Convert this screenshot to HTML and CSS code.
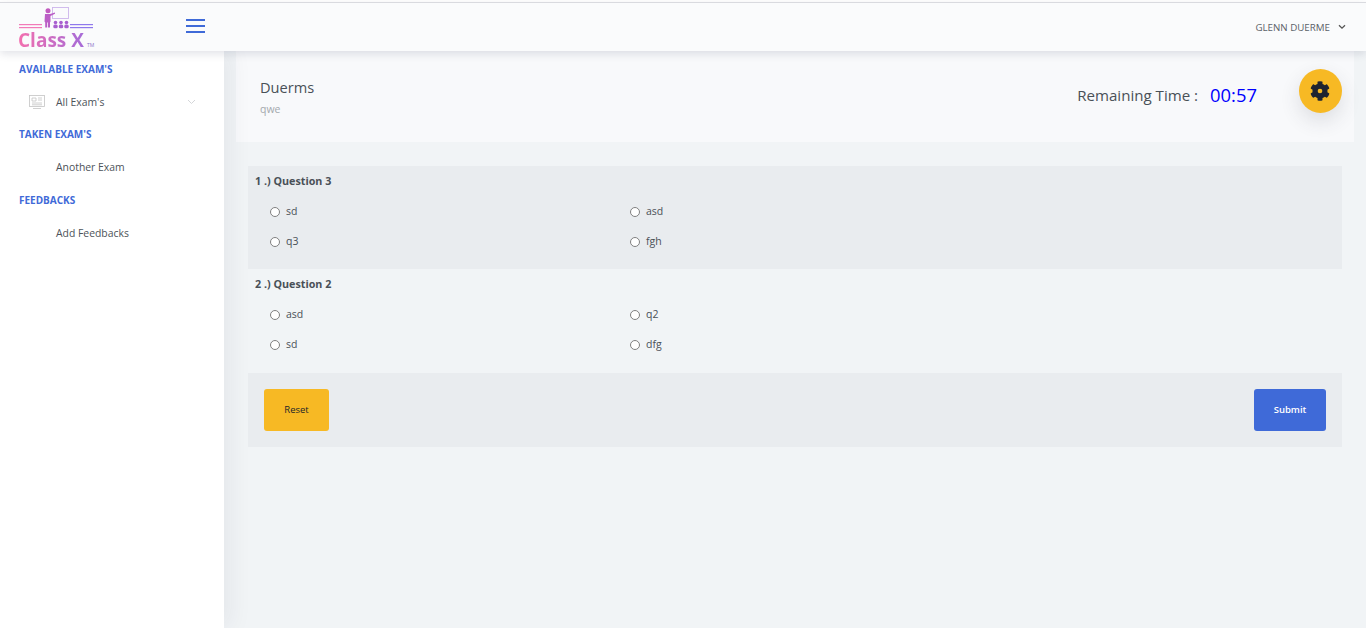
FILE: index.html
```html
<!DOCTYPE html>
<html lang="en">
<head>
<meta charset="utf-8">
<title>Class X</title>
<link rel="stylesheet" href="styles.css">
</head>
<body>
<div class="app">
  <header class="topbar">
    <div class="brand">
      <svg class="logo-art" width="76" height="25" viewBox="0 0 76 25">
        <rect x="1" y="17" width="23" height="1.200" fill="#f27ab8"/>
        <rect x="1" y="20" width="23" height="1.200" fill="#f27ab8"/>
        <rect x="52" y="17" width="23" height="1.200" fill="#8f78ec"/>
        <rect x="52" y="20" width="23" height="1.200" fill="#8f78ec"/>
        <rect x="34.500" y="0.500" width="16" height="11" fill="none" stroke="#cdb6ec" stroke-width="0.900"/>
        <circle cx="30" cy="3.800" r="2.500" fill="#c25cc0"/>
        <path d="M27 7h5l5-1.500v1.300l-4.500 2.200v5.500l-.5 1v5h-2v-5h-.8v5h-2v-5l-.7-1z" fill="#bb5fc6"/>
        <g fill="#a85fcf">
          <circle cx="37.500" cy="15.500" r="1.800"/><circle cx="43" cy="15.500" r="1.800"/><circle cx="48.500" cy="15.500" r="1.800"/>
          <rect x="35.300" y="17.500" width="4.400" height="3.800" rx="1.500"/><rect x="40.800" y="17.500" width="4.400" height="3.800" rx="1.500"/><rect x="46.300" y="17.500" width="4.400" height="3.800" rx="1.500"/>
        </g>
      </svg>
      <div class="logo-text"><span class="logo-name">Class X</span><span class="logo-tm">TM</span></div>
    </div>
    <button class="burger" aria-label="Menu"><span></span><span></span><span></span></button>
    <div class="user">
      <span>GLENN DUERME</span>
      <svg width="8" height="6" viewBox="0 0 8 6"><path d="M1 1.200l3 3 3-3" fill="none" stroke="#555" stroke-width="1.300"/></svg>
    </div>
  </header>
  <div class="body-row">
    <aside class="sidebar">
      <h3 class="nav-title">AVAILABLE EXAM'S</h3>
      <a class="nav-item">
        <svg class="nav-icon" width="16" height="16" viewBox="0 0 16 16" fill="none" stroke="#c4c4c4" stroke-width="0.800">
          <rect x="0.500" y="1.500" width="15" height="11"/>
          <path d="M3 4h4v3H3zM9 4h4M9 6h4M3 9h10M3 10.800h10M4 14.500h8"/>
        </svg>
        <span>All Exam's</span>
        <svg class="nav-caret" width="9" height="6" viewBox="0 0 9 6"><path d="M1 1l3.500 3.500L8 1" fill="none" stroke="#d4d6d9" stroke-width="1"/></svg>
      </a>
      <h3 class="nav-title">TAKEN EXAM'S</h3>
      <a class="nav-item"><span class="nav-spacer"></span><span>Another Exam</span></a>
      <h3 class="nav-title">FEEDBACKS</h3>
      <a class="nav-item"><span class="nav-spacer"></span><span>Add Feedbacks</span></a>
    </aside>
    <main class="main">
      <section class="title-card">
        <div class="title-text">
          <h1>Duerms</h1>
          <p>qwe</p>
        </div>
        <div class="timer">
          <span class="timer-label">Remaining Time :</span>
          <span class="timer-value">00:57</span>
        </div>
      </section>
      <form class="exam">
        <fieldset class="question shaded">
          <legend class="q-title">1 .) Question 3</legend>
          <div class="options">
            <label><input type="radio" name="q1"><span>sd</span></label>
            <label><input type="radio" name="q1"><span>asd</span></label>
            <label><input type="radio" name="q1"><span>q3</span></label>
            <label><input type="radio" name="q1"><span>fgh</span></label>
          </div>
        </fieldset>
        <fieldset class="question">
          <legend class="q-title">2 .) Question 2</legend>
          <div class="options">
            <label><input type="radio" name="q2"><span>asd</span></label>
            <label><input type="radio" name="q2"><span>q2</span></label>
            <label><input type="radio" name="q2"><span>sd</span></label>
            <label><input type="radio" name="q2"><span>dfg</span></label>
          </div>
        </fieldset>
        <div class="actions">
          <button type="reset" class="btn btn-reset">Reset</button>
          <button type="button" class="btn btn-submit">Submit</button>
        </div>
      </form>
    </main>
  </div>
  <button class="fab" aria-label="Settings">
    <svg width="20" height="20" viewBox="0 0 512 512"><path fill="#1f2430" d="M487 316l-42-25a191 191 0 0 0 0-70l42-25c5-3 7-9 6-14a248 248 0 0 0-55-95c-4-4-10-5-15-2l-42 24a188 188 0 0 0-61-35V26c0-6-4-11-9-12a250 250 0 0 0-110 0c-5 1-9 6-9 12v48a194 194 0 0 0-61 35L89 85c-5-3-11-2-15 2a247 247 0 0 0-55 95c-2 5 1 11 5 14l42 25a191 191 0 0 0 0 70l-42 25c-5 3-7 9-5 14a248 248 0 0 0 55 95c4 4 10 5 15 2l42-24a188 188 0 0 0 61 35v48c0 6 4 11 9 12a250 250 0 0 0 110 0c5-1 9-6 9-12v-48a194 194 0 0 0 61-35l42 24c5 3 11 2 15-2a247 247 0 0 0 55-95c1-5-1-11-6-14zM256 316a60 60 0 1 1 0-120 60 60 0 0 1 0 120z"/></svg>
  </button>
</div>
</body>
</html>
```
FILE: styles.css
```css
* { box-sizing: border-box; }
html, body { margin: 0; height: 100%; overflow: hidden; }
body { font-family: "Open Sans", "Noto Sans", sans-serif; color: #495057; background: #fff; }
.app { position: relative; height: 628px; display: flex; flex-direction: column; padding-top: 2px; }
.topbar { position: relative; z-index: 3; flex: 0 0 49px; display: flex; align-items: center; background: #fafbfc; border-top: 1px solid #d9dadf; box-shadow: 0 3px 8px rgba(50, 60, 90, .14); padding-right: 20px; }
.brand { width: 186px; padding-left: 18px; height: 100%; display: flex; flex-direction: column; }
.logo-art { margin-top: 4px; flex: none; }
.logo-text { margin-top: -2px; display: flex; align-items: flex-end; line-height: 20px; }
.logo-name { font-weight: 700; font-size: 19px; background: linear-gradient(90deg, #f36fae, #a66bd8); -webkit-background-clip: text; background-clip: text; color: transparent; }
.logo-tm { font-size: 5px; color: #8c78c8; margin: 0 0 1px 3px; line-height: 8px; }
.burger { width: 19px; height: 14px; padding: 0; border: 0; background: none; display: flex; flex-direction: column; justify-content: space-between; margin-top: -2px; }
.burger span { display: block; height: 2px; background: #3f6ad8; }
.user { margin-left: auto; display: flex; align-items: center; gap: 8px; font-size: 9.750px; color: #5b6168; }
.body-row { flex: 1; display: flex; min-height: 0; }
.sidebar { position: relative; z-index: 2; flex: 0 0 224px; background: #fff; box-shadow: 7px 0 22px rgba(30, 40, 70, .06); padding: 12px 0 0 19px; }
.nav-title { margin: 0; height: 12px; line-height: 12px; font-size: 10px; font-weight: 700; color: #3f6ad8; }
.nav-item { display: flex; align-items: center; height: 20px; margin: 17px 0 16.300px; font-size: 10.400px; color: #4d5359; padding-left: 10px; padding-right: 28px; }
.nav-icon { flex: none; margin-right: 11px; }
.nav-spacer { flex: none; width: 27px; }
.nav-caret { margin-left: auto; }
.main { flex: 1; min-width: 0; background: #f1f4f6; padding: 0 12px; }
.title-card { height: 91px; background: #f8f9fb; display: flex; justify-content: space-between; align-items: flex-start; padding: 0 97px 0 24px; }
.title-text { padding-top: 26px; }
.title-text h1 { margin: 0; font-size: 14.600px; line-height: 20px; font-weight: 400; color: #495057; }
.title-text p { margin: 5px 0 0; font-size: 10.500px; line-height: 14px; color: #a4a9ae; }
.timer { display: flex; align-items: center; gap: 12px; margin-top: 31px; }
.timer-label { font-size: 15.100px; color: #495057; }
.timer-value { font-size: 18.400px; color: #0000ff; }
.exam { margin: 24px 12px 0; }
.question { margin: 0; border: 0; padding: 7px 0 0 7px; height: 103px; min-width: 0; display: block; position: relative; }
.question + .question { height: 104px; }
.shaded { background: #e9ecef; }
.q-title { display: block; float: left; width: 100%; padding: 0; font-size: 10.750px; font-weight: 700; line-height: 16px; color: #495057; }
.options { clear: both; display: grid; grid-template-columns: 360px 1fr; grid-auto-rows: 30px; padding: 7px 0 0 15px; }
.options label { display: flex; align-items: center; gap: 6px; font-size: 10.500px; color: #495057; }
.options input { appearance: none; width: 10px; height: 10px; margin: 1px 0 0; border: 1px solid #808080; border-radius: 50%; background: #fff; flex: none; }
.actions { height: 74px; background: #e9ecef; display: flex; justify-content: space-between; align-items: center; padding: 0 16px; }
.btn { height: 42px; border: 0; border-radius: 3px; font-family: inherit; font-size: 9.500px; padding: 0 0 2px; }
.btn-reset { width: 65px; background: #f7b924; color: #212529; }
.btn-submit { width: 72px; background: #3f6ad8; color: #fff; font-weight: 600; }
.fab { position: absolute; left: 1299px; top: 69px; z-index: 4; width: 43px; height: 44px; border: 0; border-radius: 50%; background: #f7b924; display: flex; align-items: center; justify-content: center; box-shadow: 0 8px 20px rgba(60, 60, 70, .14); padding: 0 1px 0 0; }
```
